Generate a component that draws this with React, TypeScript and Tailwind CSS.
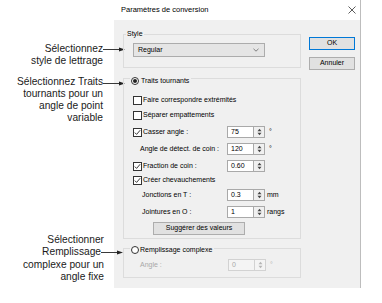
import React from "react";

// Small Windows-style controls used in the dialog
function CheckBox({ checked }: { checked?: boolean }) {
  return (
    <span className="flex h-[9px] w-[9px] shrink-0 items-center justify-center border border-[#333333] bg-white">
      {checked && (
        <svg width="7" height="7" viewBox="0 0 7 7">
          <path d="M0.8 3.6 L2.6 5.4 L6.2 1.2" fill="none" stroke="#222" strokeWidth="0.9" />
        </svg>
      )}
    </span>
  );
}

function Radio({ checked, disabled }: { checked?: boolean; disabled?: boolean }) {
  return (
    <span
      className={
        "flex h-[8px] w-[8px] shrink-0 items-center justify-center rounded-full border bg-white " +
        (disabled ? "border-[#555555]" : "border-[#333333]")
      }
    >
      {checked && <span className="h-[4px] w-[4px] rounded-full bg-[#222222]" />}
    </span>
  );
}

function Spin({ value, disabled }: { value: string; disabled?: boolean }) {
  const arrow = disabled ? "#b5b5b5" : "#444";
  return (
    <div className="flex h-[12px]">
      <div
        className={
          "flex w-[27px] items-center border pl-[3px] " +
          (disabled
            ? "border-[#d2d2d2] bg-[#f4f4f4] text-[#a8a8a8]"
            : "border-[#a9a9a9] bg-white")
        }
      >
        {value}
      </div>
      <div
        className={
          "flex w-[11px] items-center justify-center border border-l-0 " +
          (disabled ? "border-[#d2d2d2] bg-[#f4f4f4]" : "border-[#a9a9a9] bg-[#f0f0f0]")
        }
      >
        <svg width="5" height="8" viewBox="0 0 5 8">
          <path d="M2.5 0.8 L4.5 3.2 L0.5 3.2 Z" fill={arrow} />
          <path d="M2.5 7.2 L4.5 4.8 L0.5 4.8 Z" fill={arrow} />
        </svg>
      </div>
    </div>
  );
}

function Arrow() {
  return (
    <svg width="22" height="5" viewBox="0 0 22 5">
      <line x1="0" y1="2.5" x2="18" y2="2.5" stroke="#222" strokeWidth="0.9" />
      <path d="M16 0.6 L22 2.5 L16 4.4 Z" fill="#222" />
    </svg>
  );
}

export default function App() {
  return (
    <div className="relative flex h-[303px] w-[382px] bg-white font-['Liberation_Sans',Arial,sans-serif] text-black">
      {/* callouts */}
      <div className="absolute left-0 top-[43px] w-[103px] text-right text-[10.2px] leading-[12px] text-[#1a1a1a]">
        <p>Sélectionnez</p>
        <p>style de lettrage</p>
      </div>
      <div className="absolute left-[103px] top-[47px]">
        <Arrow />
      </div>

      <div className="absolute left-0 top-[76px] w-[103px] text-right text-[10.2px] leading-[12px] text-[#1a1a1a]">
        <p>Sélectionnez Traits</p>
        <p>tournants pour un</p>
        <p>angle de point</p>
        <p>variable</p>
      </div>
      <div className="absolute left-[103px] top-[81px]">
        <Arrow />
      </div>

      <div className="absolute left-0 top-[234px] w-[104px] text-right text-[10.2px] leading-[12.3px] text-[#1a1a1a]">
        <p>Sélectionner</p>
        <p className="pr-[3px]">Remplissage</p>
        <p>complexe pour un</p>
        <p>angle fixe</p>
      </div>
      <div className="absolute left-[101px] top-[250px]">
        <Arrow />
      </div>

      {/* dialog */}
      <div className="ml-[114px] flex h-[288px] w-[247px] flex-col border-r border-[#bdbdbd]">
        <div className="flex h-[20px] items-center justify-between bg-white pl-[7px] pr-[4px] text-[7.5px]">
          <span>Paramètres de conversion</span>
          <svg width="8" height="8" viewBox="0 0 8 8">
            <path d="M0.5 0.5 L7.5 7.5 M7.5 0.5 L0.5 7.5" stroke="#333" strokeWidth="0.8" />
          </svg>
        </div>

        <div className="flex flex-1 bg-[#f0f0f0] pl-[9px] pt-[14px] text-[7px]">
          <div className="flex w-[178px] flex-col">
            {/* Style */}
            <div className="relative h-[34px] border border-[#dcdcdc] pl-[9px] pt-[8px]">
              <span className="absolute left-[2px] top-[-6px] flex h-[10px] items-center bg-[#f0f0f0] px-[1px]">
                Style
              </span>
              <div className="flex h-[14px] w-[132px] items-center justify-between border border-[#acacac] bg-[#e5e5e5] pl-[4px] pr-[5px]">
                <span>Regular</span>
                <svg width="6" height="4" viewBox="0 0 6 4">
                  <path d="M0.5 0.8 L3 3.2 L5.5 0.8" fill="none" stroke="#555" strokeWidth="0.7" />
                </svg>
              </div>
            </div>

            {/* Traits tournants */}
            <div className="relative mt-[10px] flex h-[161px] flex-col border border-[#dcdcdc] pl-[9px] pt-[14px]">
              <span className="absolute left-[6px] top-[-4px] flex h-[12px] items-center gap-[2px] bg-[#f0f0f0] pl-[1px] pr-[2px]">
                <Radio checked />
                <span>Traits tournants</span>
              </span>

              <div className="flex h-[14px] items-center gap-[1px]">
                <CheckBox />
                <span>Faire correspondre extrémités</span>
              </div>
              <div className="mt-[1px] flex h-[14px] items-center gap-[1px]">
                <CheckBox />
                <span>Séparer empattements</span>
              </div>
              <div className="mt-[3px] flex h-[14px] items-center">
                <div className="flex w-[94px] items-center gap-[1px]">
                  <CheckBox checked />
                  <span>Casser angle :</span>
                </div>
                <Spin value="75" />
                <span className="ml-[4px]">°</span>
              </div>
              <div className="mt-[3px] flex h-[14px] items-center">
                <span className="w-[94px] pl-[7px]">Angle de détect. de coin :</span>
                <Spin value="120" />
                <span className="ml-[4px]">°</span>
              </div>
              <div className="mt-[3px] flex h-[14px] items-center">
                <div className="flex w-[94px] items-center gap-[1px]">
                  <CheckBox checked />
                  <span>Fraction de coin :</span>
                </div>
                <Spin value="0.60" />
              </div>
              <div className="flex h-[14px] items-center gap-[1px]">
                <CheckBox checked />
                <span>Créer chevauchements</span>
              </div>
              <div className="mt-[1px] flex h-[14px] items-center">
                <span className="w-[94px] pl-[9px]">Jonctions en T :</span>
                <Spin value="0.3" />
                <span className="ml-[2px]">mm</span>
              </div>
              <div className="mt-[3px] flex h-[14px] items-center">
                <span className="w-[94px] pl-[9px]">Jointures en O :</span>
                <Spin value="1" />
                <span className="ml-[2px]">rangs</span>
              </div>
              <div className="mt-[3px] ml-[20px] flex h-[13px] w-[92px] items-center justify-center border border-[#adadad] bg-[#e1e1e1]">
                Suggérer des valeurs
              </div>
            </div>

            {/* Remplissage complexe */}
            <div className="relative mt-[9px] h-[30px] border border-[#dcdcdc] pl-[9px] pt-[10px]">
              <span className="absolute left-[6px] top-[-4px] flex h-[10px] items-center gap-[1px] bg-[#f0f0f0] pl-[1px] pr-[2px]">
                <Radio />
                <span>Remplissage complexe</span>
              </span>
              <div className="flex h-[12px] items-center">
                <span className="w-[95px] pl-[7px] text-[#a8a8a8]">Angle :</span>
                <Spin value="0" disabled />
                <span className="ml-[4px] text-[#b5b5b5]">°</span>
              </div>
            </div>
          </div>

          {/* buttons */}
          <div className="ml-[8px] flex flex-col pt-[3px]">
            <div className="flex h-[13px] w-[46px] items-center justify-center border border-[#0078d7] bg-[#e1e1e1]">
              OK
            </div>
            <div className="mt-[7px] flex h-[13px] w-[46px] items-center justify-center border border-[#adadad] bg-[#e1e1e1]">
              Annuler
            </div>
          </div>
        </div>
      </div>
    </div>
  );
}
